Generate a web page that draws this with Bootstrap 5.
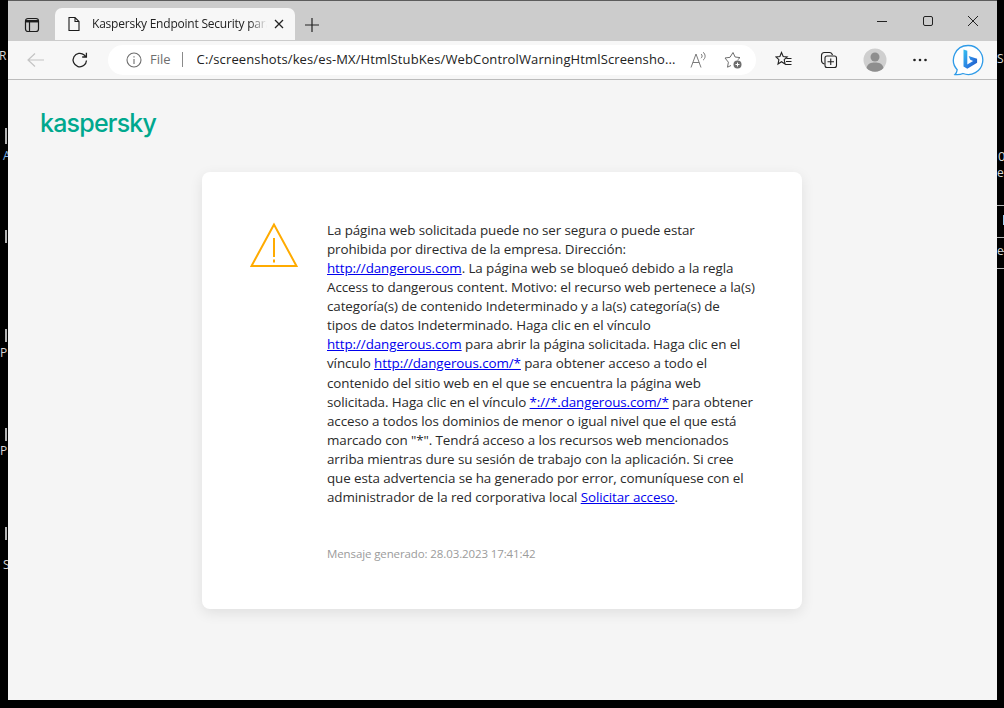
<!DOCTYPE html>
<html lang="es-MX">
<head>
<meta charset="utf-8">
<title>Kaspersky Endpoint Security</title>
<link href="https://cdn.jsdelivr.net/npm/bootstrap@5.3.0/dist/css/bootstrap.min.css" rel="stylesheet">
<style>
html,body{height:708px;overflow:hidden}
body{background:#000;font-family:"Open Sans","Noto Sans",sans-serif;color:#262626}
.shell{height:708px}
.gutter{position:relative;color:#d8d8d8;font-size:12px;line-height:14px;overflow:hidden}
.gutter-l{width:8px}
.gutter-r{width:7px}
.gutter span{position:absolute}
.gutter i{position:absolute;display:block;background:#b4b4b4}
.browser{width:989px;height:700px}
.tabstrip{height:41px;background:#ccc;border-top:1px solid #5c5c5c}
.tab-side{width:47px;padding-top:8px}
.browser-tab{width:240px;height:32px;background:#f7f7f7;border-radius:7px 7px 0 0;margin-top:7px;padding:0 11px 0 12px;font-size:12px;color:#222}
.tab-title{width:175px;white-space:nowrap;overflow:hidden;margin-left:11px;-webkit-mask-image:linear-gradient(90deg,#000 90%,transparent);mask-image:linear-gradient(90deg,#000 90%,transparent);letter-spacing:-.22px}
.plus-cell{width:34px;padding-top:8px}
.win-btn{width:45.5px;height:40px}
.win-row{padding-right:1px}
.toolbar{height:39px;background:#f7f7f7;border-bottom:1px solid #bcbcbc;padding-bottom:1px}
.tool-left{width:100px;padding-left:6px}
.tool-cell{width:44px}
.addr{width:648px;height:30px;background:#fff;border-radius:15px;font-size:13px;color:#222;padding:0 14px 0 18px;white-space:nowrap}
.addr-file{color:#6e6e6e;margin-left:8px}
.addr-sep{width:1px;height:15px;background:#8a8a8a;margin:0 14px 0 11px}
.addr-url{flex:1;overflow:hidden;letter-spacing:.12px}
.tool-right{flex:1;padding-left:5px}
.right-cell{width:45.5px}
.bing-cell{margin:0 13px 0 auto}
.page-area{background:#f5f5f5;height:620px;padding:29px 0 0 32px}
.brand{font-family:Inter,Lato,sans-serif;font-weight:500;font-size:25px;line-height:28px;color:#00a88e;letter-spacing:-.8px;height:28px}
.panel-wrap{margin:35px 0 0 162px;width:600px}
.panel{background:#fff;border-radius:8px;box-shadow:0 4px 14px rgba(0,0,0,.09);height:437px;padding:49px 40px 0 48px}
.warn-col{width:77px;flex:none;padding-top:1px}
.msg{font-size:13.4px;line-height:19.07px;letter-spacing:-.09px;color:#2a2a2a;white-space:nowrap;margin:0}
.msg a{color:#00e}
.stamp{font-size:11.5px;color:#9b9b9b;margin:37px 0 0;line-height:19px;letter-spacing:-.11px}
</style>
</head>
<body>
<div class="shell d-flex">
  <div class="gutter gutter-l flex-none">
    <span style="left:-1px;top:49px">R</span>
    <i style="left:5px;top:128px;width:2px;height:16px"></i>
    <span style="left:3px;top:149px;color:#7fb4e6">A</span>
    <i style="left:5px;top:230px;width:2px;height:13px"></i>
    <i style="left:5px;top:329px;width:2px;height:13px"></i>
    <span style="left:0;top:346px">P</span>
    <i style="left:5px;top:428px;width:2px;height:13px"></i>
    <span style="left:0;top:444px">P</span>
    <i style="left:5px;top:527px;width:2px;height:13px"></i>
    <span style="left:3px;top:558px">S</span>
  </div>
  <div class="browser d-flex flex-column">
    <div class="tabstrip d-flex">
      <div class="tab-side d-flex align-items-center justify-content-center">
        <svg width="16" height="16" viewBox="0 0 16 16" fill="none" stroke="#1c1c1c" stroke-width="1.2"><rect x="1.500" y="1.500" width="13" height="13" rx="2.500"/><path d="M5.500 5v9.500"/><path d="M2 4.200h12" stroke-width="2.500"/></svg>
      </div>
      <div class="browser-tab d-flex align-items-center">
        <svg width="14" height="16" viewBox="0 0 14 16" fill="none" stroke="#1c1c1c" stroke-width="1.1"><path d="M2 1.500h6l4 4v9H2zM8 1.500v4h4"/></svg>
        <div class="tab-title">Kaspersky Endpoint Security para Windows</div>
        <svg class="ms-auto" width="10" height="10" viewBox="0 0 10 10" stroke="#222" stroke-width="1.3"><path d="M1 1l8 8M9 1l-8 8"/></svg>
      </div>
      <div class="plus-cell d-flex align-items-center justify-content-center">
        <svg width="16" height="16" viewBox="0 0 16 16" stroke="#222" stroke-width="1.2"><path d="M8 1v14M1 8h14"/></svg>
      </div>
      <div class="win-row ms-auto d-flex">
        <div class="win-btn d-flex align-items-center justify-content-center"><svg width="12" height="12" viewBox="0 0 12 12" stroke="#222" stroke-width="1"><path d="M1 6.500h10"/></svg></div>
        <div class="win-btn d-flex align-items-center justify-content-center"><svg width="12" height="12" viewBox="0 0 12 12" fill="none" stroke="#222" stroke-width="1"><rect x="1.500" y="1.500" width="9" height="9" rx="1.500"/></svg></div>
        <div class="win-btn d-flex align-items-center justify-content-center"><svg width="12" height="12" viewBox="0 0 12 12" stroke="#222" stroke-width="1"><path d="M1 1l10 10M11 1l-10 10"/></svg></div>
      </div>
    </div>
    <div class="toolbar d-flex align-items-center">
      <div class="tool-left d-flex align-items-center flex-none">
        <div class="tool-cell d-flex justify-content-center"><svg width="20" height="16" viewBox="0 0 20 16" fill="none" stroke="#c4c4c4" stroke-width="1.2"><path d="M18 8H2M9 1.500L2 8l7 6.500"/></svg></div>
        <div class="tool-cell d-flex justify-content-center"><svg width="18" height="18" viewBox="0 0 18 18" fill="none" stroke="#222" stroke-width="1.3"><path d="M15.500 9.500a6.700 6.700 0 1 1-2.200-5.400L15 6M15.400 1.800V6h-4.200"/></svg></div>
      </div>
      <div class="addr d-flex align-items-center flex-none">
        <svg width="16" height="16" viewBox="0 0 16 16" fill="none" stroke="#6e6e6e" stroke-width="1.100"><circle cx="8" cy="8" r="7"/><path d="M8 7v5M8 4.200v1.400"/></svg>
        <span class="addr-file">File</span><span class="addr-sep"></span>
        <span class="addr-url">C:/screenshots/kes/es-MX/HtmlStubKes/WebControlWarningHtmlScreensho...</span>
        <svg class="ms-2" width="18" height="18" viewBox="0 0 18 18" fill="none" stroke="#7a7a7a" stroke-width="1"><path d="M1 16.500L6 3l5 13.500M2.800 11.500h6.400M11 3c1.500 1 1.500 3 0 4.200M13 1.200c2.800 2 2.800 6 0 8"/></svg>
        <svg class="ms-3" width="18" height="18" viewBox="0 0 18 18" fill="none" stroke="#6e6e6e" stroke-width="1"><path d="M9 1.500l2.100 4.500 4.900.6-2.400 2.300M7 14.500l-3.500 1.700.9-5L1 7l5-.7L9 1.500"/><circle cx="13.500" cy="13.500" r="4" fill="#6e6e6e" stroke="none"/><path d="M13.500 11.500v4M11.500 13.500h4" stroke="#fff"/></svg>
      </div>
      <div class="tool-right d-flex align-items-center">
        <div class="right-cell d-flex justify-content-center"><svg width="18" height="18" viewBox="0 0 18 18" fill="none" stroke="#222" stroke-width="1.100"><path d="M6.500 1.500l1.700 4 4 .4-3 2.800.9 4.300-3.600-2.300L3 13l.9-4.300L1 5.900l3.900-.4zM11.500 7.500h5M11 10.500h5.500M10.500 13.500h6"/></svg></div>
        <div class="right-cell d-flex justify-content-center"><svg width="18" height="18" viewBox="0 0 18 18" fill="none" stroke="#222" stroke-width="1.100"><path d="M4.500 13C2.500 12.500 1.500 11 1.500 9.500V4.500C1.500 2.800 2.800 1.500 4.500 1.500h5C11 1.500 12 2.200 12.500 4"/><rect x="5" y="5" width="11.500" height="11.500" rx="2"/><path d="M10.750 7.500v6.500M7.500 10.750h6.500"/></svg></div>
        <div class="right-cell d-flex justify-content-center"><svg width="24" height="24" viewBox="0 0 24 24"><circle cx="12" cy="12" r="11.500" fill="#cfcfcf"/><circle cx="12" cy="9" r="4.500" fill="#8e8e8e"/><path d="M3.500 20c1-4.500 4.500-5.500 8.500-5.500s7.500 1 8.500 5.500a11.500 11.500 0 0 1-17 0z" fill="#8e8e8e"/></svg></div>
        <div class="right-cell d-flex justify-content-center"><svg width="16" height="4" viewBox="0 0 16 4" fill="#222"><circle cx="2.500" cy="2" r="1.300"/><circle cx="8" cy="2" r="1.300"/><circle cx="13.500" cy="2" r="1.300"/></svg></div>
        <div class="bing-cell d-flex"><svg width="32" height="32" viewBox="0 0 32 32"><defs><linearGradient id="bg" x1="0" y1="0" x2="1" y2="1"><stop offset="0" stop-color="#35c1f1"/><stop offset=".6" stop-color="#2a7de1"/><stop offset="1" stop-color="#1b4fb8"/></linearGradient></defs><path d="M16 1.500a14.500 14.500 0 1 1-5 28c-2 .9-5 1.300-8 1 1.300-1.300 2-2.900 2.200-4.800A14.500 14.500 0 0 1 16 1.500z" fill="#fff" stroke="#2f9be8" stroke-width="1.300"/><path d="M11.500 5.500l3.800 1.300v13.700l5.800-3.400-2.800-1.300-1.700-3.900 8.500 2.900v4l-9.800 6-3.800-2.200z" fill="url(#bg)"/></svg></div>
      </div>
    </div>
    <main class="page-area">
      <div class="brand">kaspersky</div>
      <div class="panel-wrap">
        <div class="panel d-flex">
          <div class="warn-col">
            <svg width="48" height="46" viewBox="0 0 48 46" fill="none" stroke="#ffab00" stroke-width="2" class="d-block"><path d="M24 2.500L1.500 44h45zM24 16v19"/><path d="M24 37.500v3"/></svg>
          </div>
          <div>
            <p class="msg">La página web solicitada puede no ser segura o puede estar<br>
prohibida por directiva de la empresa. Dirección:<br>
<a href="#">http://dangerous.com</a>. La página web se bloqueó debido a la regla<br>
Access to dangerous content. Motivo: el recurso web pertenece a la(s)<br>
categoría(s) de contenido Indeterminado y a la(s) categoría(s) de<br>
tipos de datos Indeterminado. Haga clic en el vínculo<br>
<a href="#">http://dangerous.com</a> para abrir la página solicitada. Haga clic en el<br>
vínculo <a href="#">http://dangerous.com/*</a> para obtener acceso a todo el<br>
contenido del sitio web en el que se encuentra la página web<br>
solicitada. Haga clic en el vínculo <a href="#">*://*.dangerous.com/*</a> para obtener<br>
acceso a todos los dominios de menor o igual nivel que el que está<br>
marcado con "*". Tendrá acceso a los recursos web mencionados<br>
arriba mientras dure su sesión de trabajo con la aplicación. Si cree<br>
que esta advertencia se ha generado por error, comuníquese con el<br>
administrador de la red corporativa local <a href="#">Solicitar acceso</a>.</p>
            <p class="stamp">Mensaje generado: 28.03.2023 17:41:42</p>
          </div>
        </div>
      </div>
    </main>
  </div>
  <div class="gutter gutter-r flex-none">
    <span style="left:0;top:52px">SH</span>
    <span style="left:1px;top:148px;font-size:13px;line-height:16px">0</span>
    <span style="left:0;top:166px">ea</span>
    <i style="left:0;top:205px;width:7px;height:1px"></i>
    <i style="left:6px;top:215px;width:3px;height:10px;background:#9fd0f0"></i>
    <i style="left:0;top:237px;width:7px;height:1px"></i>
    <span style="left:0;top:244px">e</span>
    <i style="left:3px;top:251px;width:4px;height:1px"></i>
    <i style="left:0;top:268px;width:7px;height:1px"></i>
  </div>
</div>
<script src="https://cdn.jsdelivr.net/npm/bootstrap@5.3.0/dist/js/bootstrap.bundle.min.js"></script>
</body>
</html>
